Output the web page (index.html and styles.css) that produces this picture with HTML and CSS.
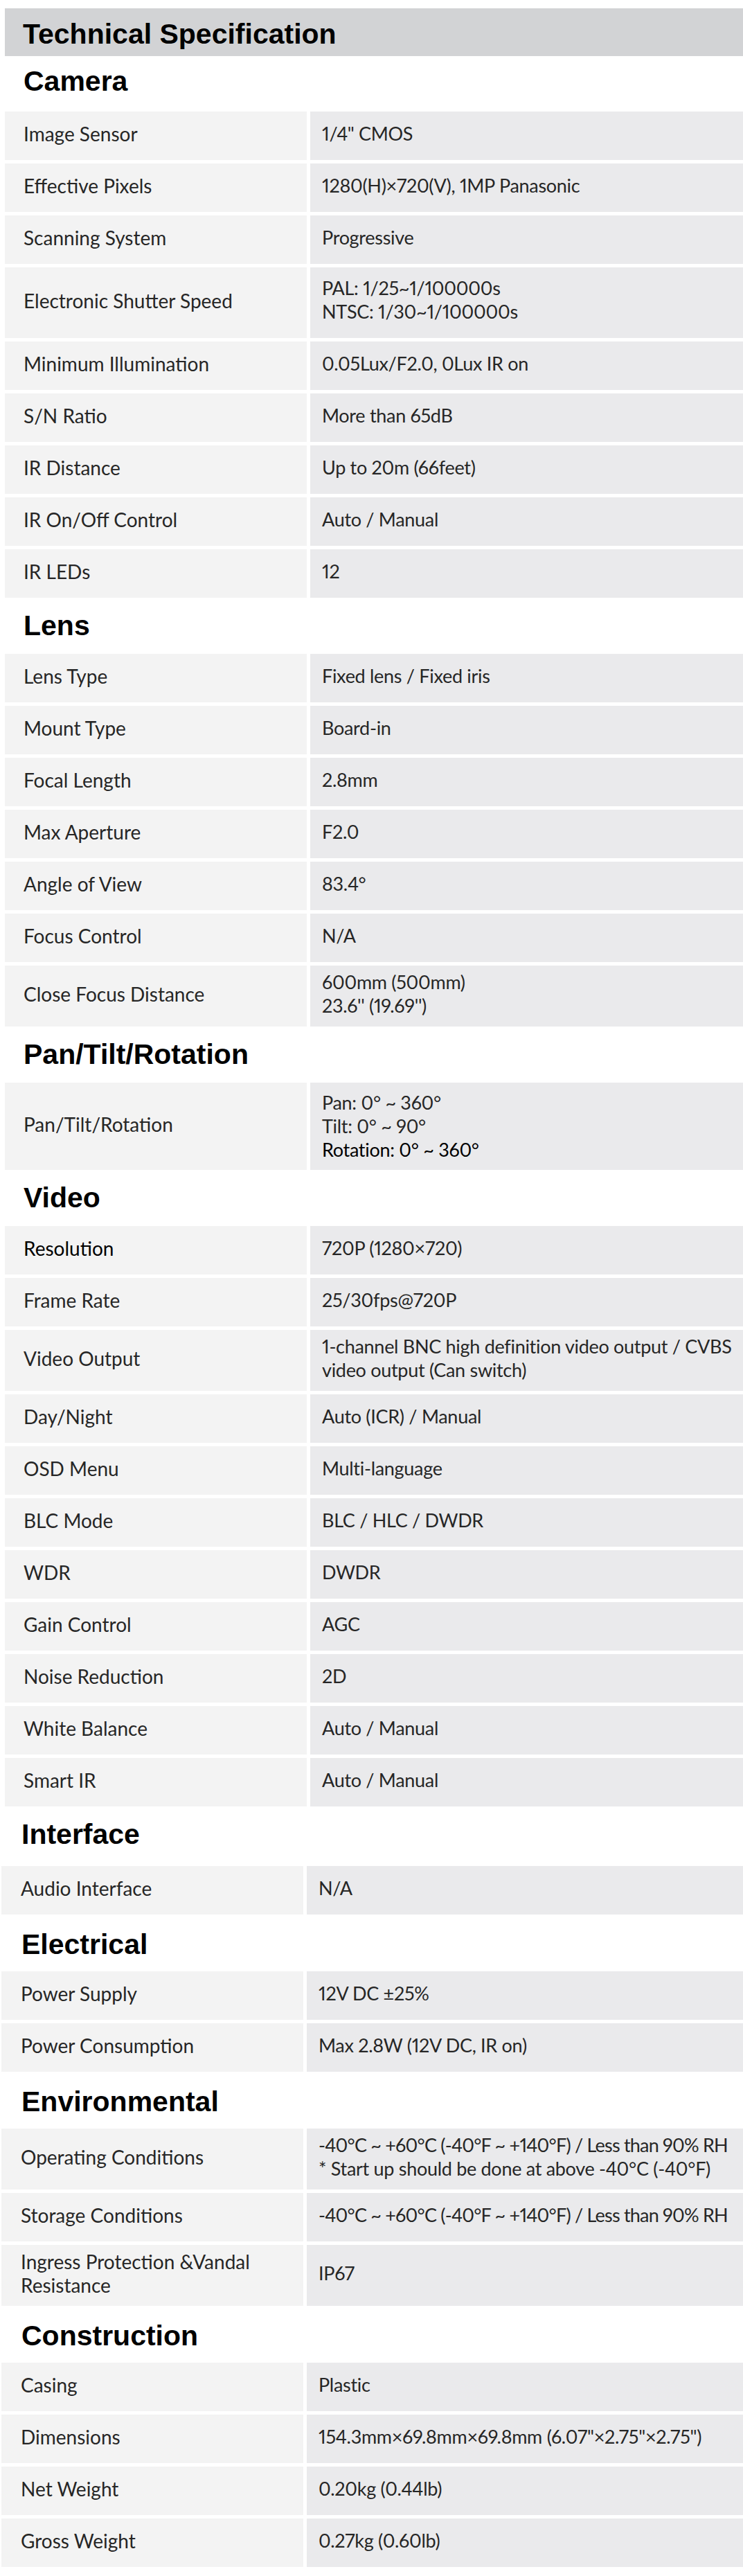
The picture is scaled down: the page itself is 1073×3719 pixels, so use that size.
FILE: index.html
```html
<!DOCTYPE html>
<html lang="en">
  <head>
    <meta charset="UTF-8" />
    <title>Technical Specification</title>
    <link rel="stylesheet" href="styles.css">
  </head>
  <body>
    <div class="spec">
      <h1 class="spec-title">Technical Specification</h1>

      <!-- Camera -->
      <section class="spec-section first">
        <h2>Camera</h2>
        <table class="spec-table">
          <tr><td class="spec-key">Image Sensor</td><td class="spec-val">1/4" CMOS</td></tr>
          <tr><td class="spec-key">Effective Pixels</td><td class="spec-val">1280(H)×720(V), 1MP Panasonic</td></tr>
          <tr><td class="spec-key">Scanning System</td><td class="spec-val">Progressive</td></tr>
          <tr><td class="spec-key">Electronic Shutter Speed</td><td class="spec-val shutter">PAL: 1/25~1/100000s<br />NTSC: 1/30~1/100000s</td></tr>
          <tr><td class="spec-key">Minimum Illumination</td><td class="spec-val">0.05Lux/F2.0, 0Lux IR on</td></tr>
          <tr><td class="spec-key">S/N Ratio</td><td class="spec-val">More than 65dB</td></tr>
          <tr><td class="spec-key">IR Distance</td><td class="spec-val">Up to 20m (66feet)</td></tr>
          <tr><td class="spec-key">IR On/Off Control</td><td class="spec-val">Auto / Manual</td></tr>
          <tr><td class="spec-key">IR LEDs</td><td class="spec-val">12</td></tr>
        </table>
      </section>

      <!-- Lens -->
      <section class="spec-section">
        <h2>Lens</h2>
        <table class="spec-table">
          <tr><td class="spec-key">Lens Type</td><td class="spec-val">Fixed lens / Fixed iris</td></tr>
          <tr><td class="spec-key">Mount Type</td><td class="spec-val">Board-in</td></tr>
          <tr><td class="spec-key">Focal Length</td><td class="spec-val">2.8mm</td></tr>
          <tr><td class="spec-key">Max Aperture</td><td class="spec-val">F2.0</td></tr>
          <tr><td class="spec-key">Angle of View</td><td class="spec-val">83.4°</td></tr>
          <tr><td class="spec-key">Focus Control</td><td class="spec-val">N/A</td></tr>
          <tr><td class="spec-key">Close Focus Distance</td><td class="spec-val">600mm (500mm)<br />23.6'' (19.69'')</td></tr>
        </table>
      </section>

      <!-- Pan/Tilt/Rotation -->
      <section class="spec-section">
        <h2>Pan/Tilt/Rotation</h2>
        <table class="spec-table">
          <tr><td class="spec-key">Pan/Tilt/Rotation</td><td class="spec-val ptr">Pan: 0° ~ 360°<br />Tilt: 0° ~ 90°<br /><span class="dark">Rotation: 0° ~ 360°</span></td></tr>
        </table>
      </section>

      <!-- Video -->
      <section class="spec-section">
        <h2>Video</h2>
        <table class="spec-table">
          <tr><td class="spec-key dark">Resolution</td><td class="spec-val">720P (1280×720)</td></tr>
          <tr><td class="spec-key">Frame Rate</td><td class="spec-val">25/30fps@720P</td></tr>
          <tr><td class="spec-key">Video Output</td><td class="spec-val">1-channel BNC high definition video output / CVBS<br />video output (Can switch)</td></tr>
          <tr><td class="spec-key">Day/Night</td><td class="spec-val">Auto (ICR) / Manual</td></tr>
          <tr><td class="spec-key">OSD Menu</td><td class="spec-val">Multi-language</td></tr>
          <tr><td class="spec-key">BLC Mode</td><td class="spec-val">BLC / HLC / DWDR</td></tr>
          <tr><td class="spec-key">WDR</td><td class="spec-val">DWDR</td></tr>
          <tr><td class="spec-key">Gain Control</td><td class="spec-val">AGC</td></tr>
          <tr><td class="spec-key">Noise Reduction</td><td class="spec-val">2D</td></tr>
          <tr><td class="spec-key">White Balance</td><td class="spec-val">Auto / Manual</td></tr>
          <tr><td class="spec-key">Smart IR</td><td class="spec-val">Auto / Manual</td></tr>
        </table>
      </section>

      <div class="spec-more">
        <!-- Interface -->
        <section class="spec-section">
          <h2>Interface</h2>
          <table class="spec-table">
            <tr><td class="spec-key">Audio Interface</td><td class="spec-val">N/A</td></tr>
          </table>
        </section>

        <!-- Electrical -->
        <section class="spec-section">
          <h2>Electrical</h2>
          <table class="spec-table">
            <tr><td class="spec-key">Power Supply</td><td class="spec-val">12V DC ±25%</td></tr>
            <tr><td class="spec-key">Power Consumption</td><td class="spec-val">Max 2.8W (12V DC, IR on)</td></tr>
          </table>
        </section>

        <!-- Environmental -->
        <section class="spec-section">
          <h2>Environmental</h2>
          <table class="spec-table">
            <tr><td class="spec-key">Operating Conditions</td><td class="spec-val"><span class="tight">-40°C ~ +60°C (-40°F ~ +140°F) / Less than 90% RH</span><br />* Start up should be done at above -40°C (-40°F)</td></tr>
            <tr><td class="spec-key">Storage Conditions</td><td class="spec-val"><span class="tight">-40°C ~ +60°C (-40°F ~ +140°F) / Less than 90% RH</span></td></tr>
            <tr><td class="spec-key">Ingress Protection &amp;Vandal<br />Resistance</td><td class="spec-val">IP67</td></tr>
          </table>
        </section>

        <!-- Construction -->
        <section class="spec-section">
          <h2>Construction</h2>
          <table class="spec-table">
            <tr><td class="spec-key">Casing</td><td class="spec-val">Plastic</td></tr>
            <tr><td class="spec-key">Dimensions</td><td class="spec-val">154.3mm×69.8mm×69.8mm (6.07"×2.75"×2.75")</td></tr>
            <tr><td class="spec-key">Net Weight</td><td class="spec-val">0.20kg (0.44lb)</td></tr>
            <tr><td class="spec-key">Gross Weight</td><td class="spec-val">0.27kg (0.60lb)</td></tr>
          </table>
        </section>
      </div>
    </div>
  </body>
</html>
```

FILE: styles.css
```css
body {
  margin: 0;
  background-color: #ffffff;
  font-family: Lato, "Liberation Sans", sans-serif;
  color: #262626;
  overflow-x: hidden;
}
.spec {
  padding: 12px 0 12px 7px;
}
.spec-title {
  margin: 0;
  padding: 14px 26px 8px;
  background-color: #d2d3d5;
  font: bold 41px/47px "Liberation Sans", Arial, sans-serif;
  color: #000000;
}
.spec-section h2 {
  margin: 12px 0 12px;
  padding-left: 27px;
  font: bold 41px/47px "Liberation Sans", Arial, sans-serif;
  color: #000000;
}
.spec-section.first h2 {
  margin: 13px 0 15px;
}
.spec-table {
  width: calc(100% + 10px);
  margin: 0 -5px;
  border-collapse: separate;
  border-spacing: 5px;
  table-layout: fixed;
}
.spec-table tr {
  height: 70px;
}
.spec-key,
.spec-val {
  padding: 7px 17px 13px;
  vertical-align: middle;
  font-size: 27px;
  line-height: 34px;
  white-space: nowrap;
}
.spec-key {
  box-sizing: border-box;
  width: 436px;
  padding-left: 27px;
  background-color: #f3f3f3;
  font-size: 28px;
}
.spec-val {
  background-color: #eaeaec;
  letter-spacing: -0.3px;
  font-variant-numeric: proportional-nums;
}
.spec-val .tight {
  letter-spacing: -0.8px;
}
.spec-val.shutter {
  padding-top: 13px;
  padding-bottom: 21px;
}
.spec-val.ptr {
  padding-top: 12px;
  padding-bottom: 12px;
}
.dark {
  color: #000000;
}

/* the lower part of the sheet sits a few pixels further left */
.spec-more {
  margin-left: -5px;
}
.spec-more h2 {
  margin: 15px 0 10px;
  padding-left: 29px;
}
.spec-more .spec-section:first-child h2 {
  margin: 12px 0 17px;
}
.spec-more .spec-key {
  padding-left: 28px;
}
```
